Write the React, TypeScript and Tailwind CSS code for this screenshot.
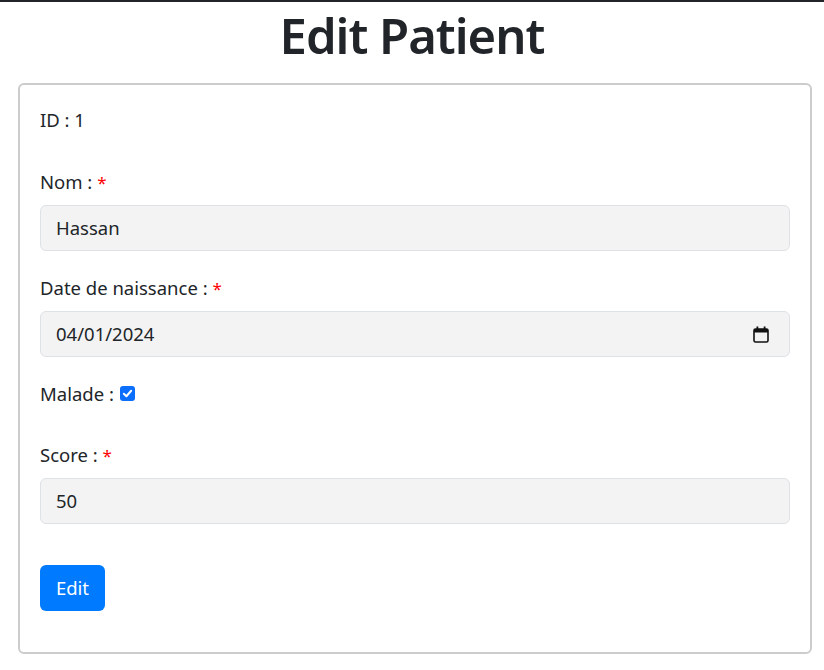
import React from "react";

const font = { fontFamily: '"Noto Sans", "Open Sans", sans-serif' };

function Label({ text, required }: { text: string; required?: boolean }) {
  return (
    <div className="h-[27px] leading-[27px] text-[18.5px] text-[#212529]">
      {text}{" "}
      {required && <span className="text-[#ff0000] text-[17px]">*</span>}
    </div>
  );
}

function Field({ value, children }: { value: string; children?: React.ReactNode }) {
  return (
    <div className="mt-[10px] h-[46px] w-full rounded-[6px] border border-[#dee2e6] bg-[#f3f3f3] pl-[15px] pr-[20px] flex items-center justify-between text-[18.5px] text-[#212529]">
      <span>{value}</span>
      {children}
    </div>
  );
}

function CalendarIcon() {
  return (
    <svg width="16" height="17" viewBox="0 0 16 17" fill="none">
      <rect x="1" y="3" width="14" height="13" rx="1.5" stroke="#111" strokeWidth="1.6" />
      <rect x="1" y="3" width="14" height="3.5" fill="#111" />
      <rect x="3.5" y="0.5" width="1.8" height="3" fill="#111" />
      <rect x="10.7" y="0.5" width="1.8" height="3" fill="#111" />
    </svg>
  );
}

export default function App() {
  return (
    <div style={font} className="w-[824px] h-[670px] bg-white text-[#212529] overflow-hidden">
      <div className="h-[2px] bg-[#212529]" />
      <h1 className="text-center text-[49px] tracking-[-1px] font-semibold leading-[64px] mt-[1px] text-[#212529]">
        Edit Patient
      </h1>
      <div className="ml-[18px] mt-[16px] w-[794px] h-[571px] rounded-[6px] border-2 border-[#cccccc] px-[20px] pt-[21px]">
        <div className="h-[27px] leading-[27px] text-[18.5px]">ID : 1</div>
        <div className="mt-[35px]">
          <Label text="Nom :" required />
          <Field value="Hassan" />
        </div>
        <div className="mt-[23px]">
          <Label text="Date de naissance :" required />
          <Field value="04/01/2024">
            <CalendarIcon />
          </Field>
        </div>
        <div className="mt-[23px] h-[27px] leading-[27px] text-[18.5px] flex items-center">
          <span>Malade :</span>
          <span className="ml-[6px] mb-[1px] inline-flex h-[15px] w-[15px] items-center justify-center rounded-[3px] bg-[#0b6efd]">
            <svg width="11" height="11" viewBox="0 0 12 12" fill="none">
              <path d="M2 6.3 L4.8 9 L10 3" stroke="white" strokeWidth="2.2" strokeLinecap="round" strokeLinejoin="round" />
            </svg>
          </span>
        </div>
        <div className="mt-[34px]">
          <Label text="Score :" required />
          <Field value="50" />
        </div>
        <button className="mt-[41px] h-[46px] w-[65px] rounded-[6px] bg-[#007bff] text-white text-[18.5px] leading-[46px]">
          Edit
        </button>
      </div>
    </div>
  );
}
